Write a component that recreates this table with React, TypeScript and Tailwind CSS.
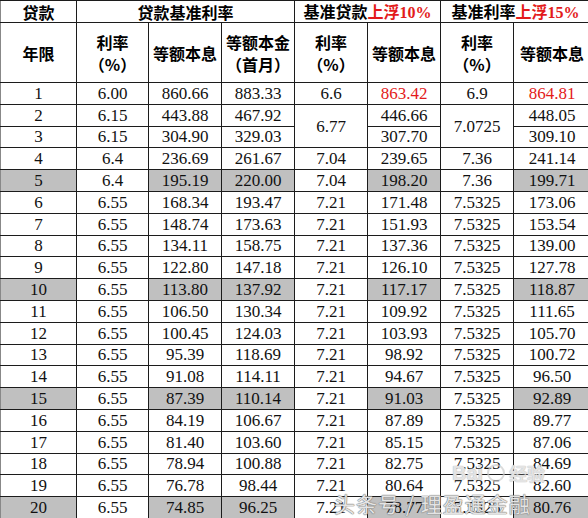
import React from "react";

type Row = {
  year: string;
  rate: string;
  eqPay: string;
  eqPrin: string;
  rate10?: string;
  pay10: string;
  rate15?: string;
  pay15: string;
  span?: boolean;
};

const rows: Row[] = [
  { year: "1", rate: "6.00", eqPay: "860.66", eqPrin: "883.33", rate10: "6.6", pay10: "863.42", rate15: "6.9", pay15: "864.81" },
  { year: "2", rate: "6.15", eqPay: "443.88", eqPrin: "467.92", rate10: "6.77", pay10: "446.66", rate15: "7.0725", pay15: "448.05", span: true },
  { year: "3", rate: "6.15", eqPay: "304.90", eqPrin: "329.03", pay10: "307.70", pay15: "309.10" },
  { year: "4", rate: "6.4", eqPay: "236.69", eqPrin: "261.67", rate10: "7.04", pay10: "239.65", rate15: "7.36", pay15: "241.14" },
  { year: "5", rate: "6.4", eqPay: "195.19", eqPrin: "220.00", rate10: "7.04", pay10: "198.20", rate15: "7.36", pay15: "199.71" },
  { year: "6", rate: "6.55", eqPay: "168.34", eqPrin: "193.47", rate10: "7.21", pay10: "171.48", rate15: "7.5325", pay15: "173.06" },
  { year: "7", rate: "6.55", eqPay: "148.74", eqPrin: "173.63", rate10: "7.21", pay10: "151.93", rate15: "7.5325", pay15: "153.54" },
  { year: "8", rate: "6.55", eqPay: "134.11", eqPrin: "158.75", rate10: "7.21", pay10: "137.36", rate15: "7.5325", pay15: "139.00" },
  { year: "9", rate: "6.55", eqPay: "122.80", eqPrin: "147.18", rate10: "7.21", pay10: "126.10", rate15: "7.5325", pay15: "127.78" },
  { year: "10", rate: "6.55", eqPay: "113.80", eqPrin: "137.92", rate10: "7.21", pay10: "117.17", rate15: "7.5325", pay15: "118.87" },
  { year: "11", rate: "6.55", eqPay: "106.50", eqPrin: "130.34", rate10: "7.21", pay10: "109.92", rate15: "7.5325", pay15: "111.65" },
  { year: "12", rate: "6.55", eqPay: "100.45", eqPrin: "124.03", rate10: "7.21", pay10: "103.93", rate15: "7.5325", pay15: "105.70" },
  { year: "13", rate: "6.55", eqPay: "95.39", eqPrin: "118.69", rate10: "7.21", pay10: "98.92", rate15: "7.5325", pay15: "100.72" },
  { year: "14", rate: "6.55", eqPay: "91.08", eqPrin: "114.11", rate10: "7.21", pay10: "94.67", rate15: "7.5325", pay15: "96.50" },
  { year: "15", rate: "6.55", eqPay: "87.39", eqPrin: "110.14", rate10: "7.21", pay10: "91.03", rate15: "7.5325", pay15: "92.89" },
  { year: "16", rate: "6.55", eqPay: "84.19", eqPrin: "106.67", rate10: "7.21", pay10: "87.89", rate15: "7.5325", pay15: "89.77" },
  { year: "17", rate: "6.55", eqPay: "81.40", eqPrin: "103.60", rate10: "7.21", pay10: "85.15", rate15: "7.5325", pay15: "87.06" },
  { year: "18", rate: "6.55", eqPay: "78.94", eqPrin: "100.88", rate10: "7.21", pay10: "82.75", rate15: "7.5325", pay15: "84.69" },
  { year: "19", rate: "6.55", eqPay: "76.78", eqPrin: "98.44", rate10: "7.21", pay10: "80.64", rate15: "7.5325", pay15: "82.60" },
  { year: "20", rate: "6.55", eqPay: "74.85", eqPrin: "96.25", rate10: "7.21", pay10: "78.77", rate15: "7.5325", pay15: "80.76" },
];

const cjk = "font-['Noto_Sans_CJK_SC',sans-serif] font-black";
const cell = "border-[1.5px] border-[#1c1c1c] text-center p-0";

export default function App() {
  return (
    <div className="relative h-[518px] w-[588px] overflow-hidden bg-white">
      <table className="w-[590px] table-fixed border-collapse font-['Liberation_Serif',serif] text-[17px] leading-none text-[#111]">
        <colgroup>
          <col className="w-[76px]" />
          <col className="w-[72px]" />
          <col className="w-[73px]" />
          <col className="w-[73px]" />
          <col className="w-[73px]" />
          <col className="w-[73px]" />
          <col className="w-[73px]" />
          <col className="w-[77px]" />
        </colgroup>
        <thead className={`${cjk} text-[16px] text-black`}>
          <tr className="h-[22px]">
            <th className={`${cell} border-l-[#888]`}>贷款</th>
            <th colSpan={3} className={cell}>
              贷款基准利率
            </th>
            <th colSpan={2} className={cell}>
              基准贷款
              <span className="text-[#e31b1b]">
                上浮<span className="font-['Liberation_Serif',serif] font-bold">10%</span>
              </span>
            </th>
            <th colSpan={2} className={cell}>
              基准利率
              <span className="text-[#e31b1b]">
                上浮<span className="font-['Liberation_Serif',serif] font-bold">15%</span>
              </span>
            </th>
          </tr>
          <tr className="h-[60px] leading-[22px]">
            <th className={`${cell} border-l-[#888]`}>年限</th>
            <th className={cell}>
              利率
              <br />
              （%）
            </th>
            <th className={cell}>等额本息</th>
            <th className={cell}>
              等额本金
              <br />
              （首月）
            </th>
            <th className={cell}>
              利率
              <br />
              （%）
            </th>
            <th className={cell}>等额本息</th>
            <th className={cell}>
              利率
              <br />
              （%）
            </th>
            <th className={cell}>等额本息</th>
          </tr>
        </thead>
        <tbody>
          {rows.map((r, i) => {
            const hl = (i + 1) % 5 === 0;
            const gray = hl ? "bg-[#c0c0c0]" : "";
            const red = i === 0 ? "text-[#e31b1b]" : "";
            return (
              <tr key={r.year} className="h-[21.8px]">
                <td className={`${cell} border-l-[#888] ${gray}`}>{r.year}</td>
                <td className={cell}>{r.rate}</td>
                <td className={`${cell} ${gray}`}>{r.eqPay}</td>
                <td className={`${cell} ${gray}`}>{r.eqPrin}</td>
                {r.rate10 !== undefined && (
                  <td rowSpan={r.span ? 2 : 1} className={cell}>
                    {r.rate10}
                  </td>
                )}
                <td className={`${cell} ${gray} ${red}`}>{r.pay10}</td>
                {r.rate15 !== undefined && (
                  <td rowSpan={r.span ? 2 : 1} className={cell}>
                    {r.rate15}
                  </td>
                )}
                <td className={`${cell} ${gray} ${red}`}>{r.pay15}</td>
              </tr>
            );
          })}
        </tbody>
      </table>

      {/* watermark */}
      <div className="pointer-events-none absolute left-[452px] top-[458px] flex items-center gap-1 font-['Liberation_Sans',sans-serif] text-[20px] font-bold text-white/60 [text-shadow:0_0_1px_#bbb,0_0_1px_#bbb]">
        <span>Bai</span>
        <span className="inline-block h-[18px] w-[18px] rounded-full border-2 border-[#ccc]/70" />
        <span className="font-['Noto_Sans_CJK_SC',sans-serif] text-[18px]">经验</span>
      </div>
      <div className="pointer-events-none absolute left-[334px] top-[488px] font-['Noto_Sans_CJK_SC',sans-serif] text-[21px] tracking-[1px] text-white/80 [text-shadow:0_0_1px_#777,0_0_1px_#777,0_0_1px_#777]">
        头条号 / 理盈通金融
      </div>
    </div>
  );
}
